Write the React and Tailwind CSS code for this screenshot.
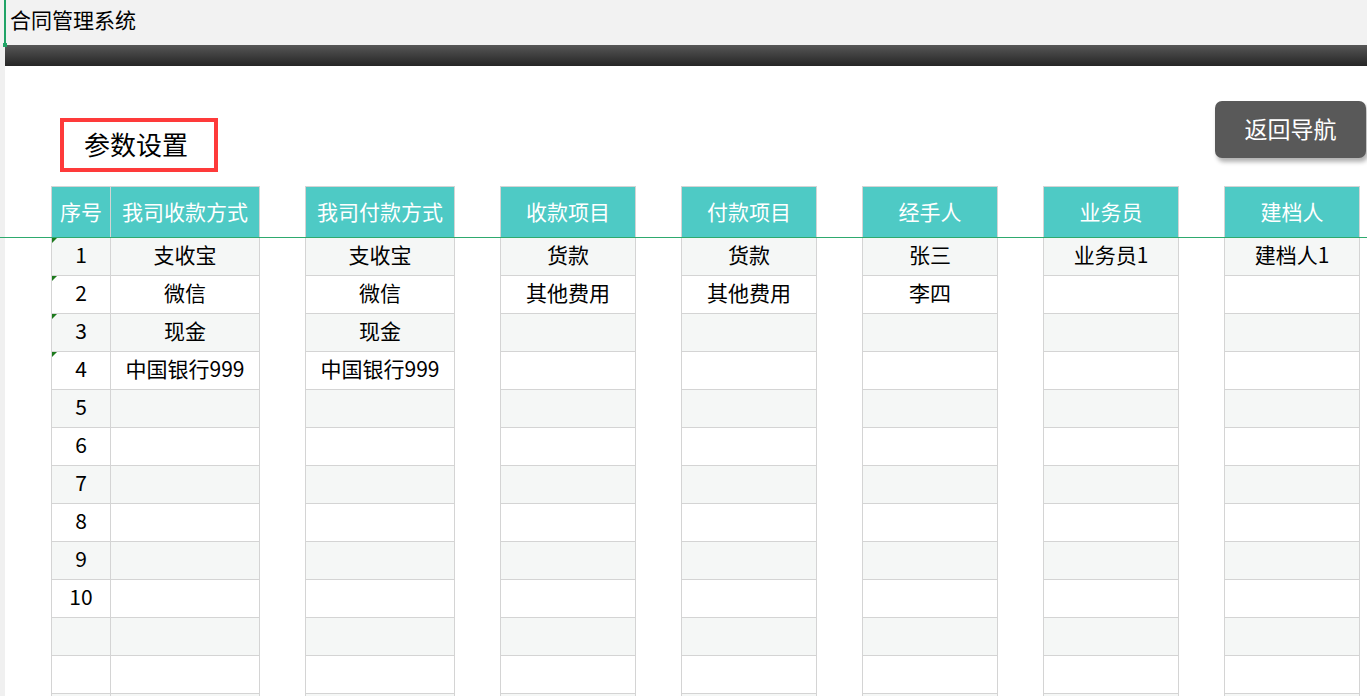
import React from 'react'

const GROUPS = [
  { cols: [{ title: '序号', w: 60 }, { title: '我司收款方式', w: 149 }], data: [['1', '支收宝'], ['2', '微信'], ['3', '现金'], ['4', '中国银行999'], ['5'], ['6'], ['7'], ['8'], ['9'], ['10']] },
  { cols: [{ title: '我司付款方式', w: 150 }], data: [['支收宝'], ['微信'], ['现金'], ['中国银行999']] },
  { cols: [{ title: '收款项目', w: 136 }], data: [['货款'], ['其他费用']] },
  { cols: [{ title: '付款项目', w: 136 }], data: [['货款'], ['其他费用']] },
  { cols: [{ title: '经手人', w: 136 }], data: [['张三'], ['李四']] },
  { cols: [{ title: '业务员', w: 136 }], data: [['业务员1']] },
  { cols: [{ title: '建档人', w: 136 }], data: [['建档人1']] },
]

const ROWS = 13

function HeaderRow() {
  return (
    <div className="flex h-[51px]">
      {GROUPS.map((g, gi) => (
        <div key={gi} className={`flex ${gi === 0 ? 'ml-[46px]' : 'ml-[45px]'}`}>
          {g.cols.map((c, ci) => (
            <div
              key={ci}
              style={{ width: c.w }}
              className={`flex items-center justify-center border-t border-r border-[#d4d4d4] bg-[#4ecac5] pb-[2px] text-[21px] leading-none text-white ${ci === 0 ? 'border-l' : ''}`}
            >
              {c.title}
            </div>
          ))}
        </div>
      ))}
    </div>
  )
}

function BodyRow({ index }) {
  const shaded = index % 2 === 0
  return (
    <div className="flex h-[38px] shrink-0">
      {GROUPS.map((g, gi) => (
        <div key={gi} className={`flex ${gi === 0 ? 'ml-[46px]' : 'ml-[45px]'}`}>
          {g.cols.map((c, ci) => {
            const value = g.data[index]?.[ci] || ''
            const marked = gi === 0 && ci === 0 && index < 4
            return (
              <div
                key={ci}
                style={{ width: c.w }}
                className={`relative flex items-center justify-center border-r border-b border-[#d4d4d4] pb-[4px] text-[21px] leading-none text-black ${ci === 0 ? 'border-l' : ''} ${shaded ? 'bg-[#f5f7f6]' : 'bg-white'}`}
              >
                {marked && (
                  <span className="absolute left-0 top-0 h-0 w-0 border-t-[5px] border-r-[5px] border-t-[#1d7a1d] border-r-transparent" />
                )}
                {value}
              </div>
            )
          })}
        </div>
      ))}
    </div>
  )
}

export default function App() {
  return (
    <div
      className="relative h-[696px] w-[1367px] overflow-hidden bg-white"
      style={{ fontFamily: '"Noto Sans CJK SC", "Microsoft YaHei", "Noto Sans", sans-serif' }}
    >
      <div className="relative flex h-[45px] items-start bg-[#f2f2f2] pl-[10px] pt-[6px]">
        <span className="absolute left-[4px] top-0 h-[45px] w-[2px] bg-[#21a366]" />
        <span className="absolute left-[3px] top-[43px] h-[4px] w-[4px] bg-[#21a366]" />
        <span className="text-[21px] leading-[26px] text-black">合同管理系统</span>
      </div>

      <div className="h-[651px] border-l-[5px] border-[#f0f0f0]">
        <div className="h-[21px] bg-gradient-to-b from-[#575757] to-[#262626]" />

        <div className="flex h-[120px] items-start justify-between">
          <div className="ml-[55px] mt-[52px] flex h-[54px] w-[158px] items-center border-4 border-[#fe3a3a] pb-[3px] pl-[20px]">
            <span className="text-[26px] leading-none text-black">参数设置</span>
          </div>
          <button className="mr-[1px] mt-[35px] h-[57px] w-[151px] rounded-[7px] bg-[#595959] pb-[3px] text-[23px] leading-none text-white shadow-[2px_4px_4px_rgba(0,0,0,0.3)]">
            返回导航
          </button>
        </div>

        <HeaderRow />
        <div className="-ml-[5px] h-px w-[1367px] bg-[#2eaa6e]" />
        <div className="flex flex-col">
          {Array.from({ length: ROWS }).map((_, i) => (
            <BodyRow key={i} index={i} />
          ))}
        </div>
      </div>
    </div>
  )
}
